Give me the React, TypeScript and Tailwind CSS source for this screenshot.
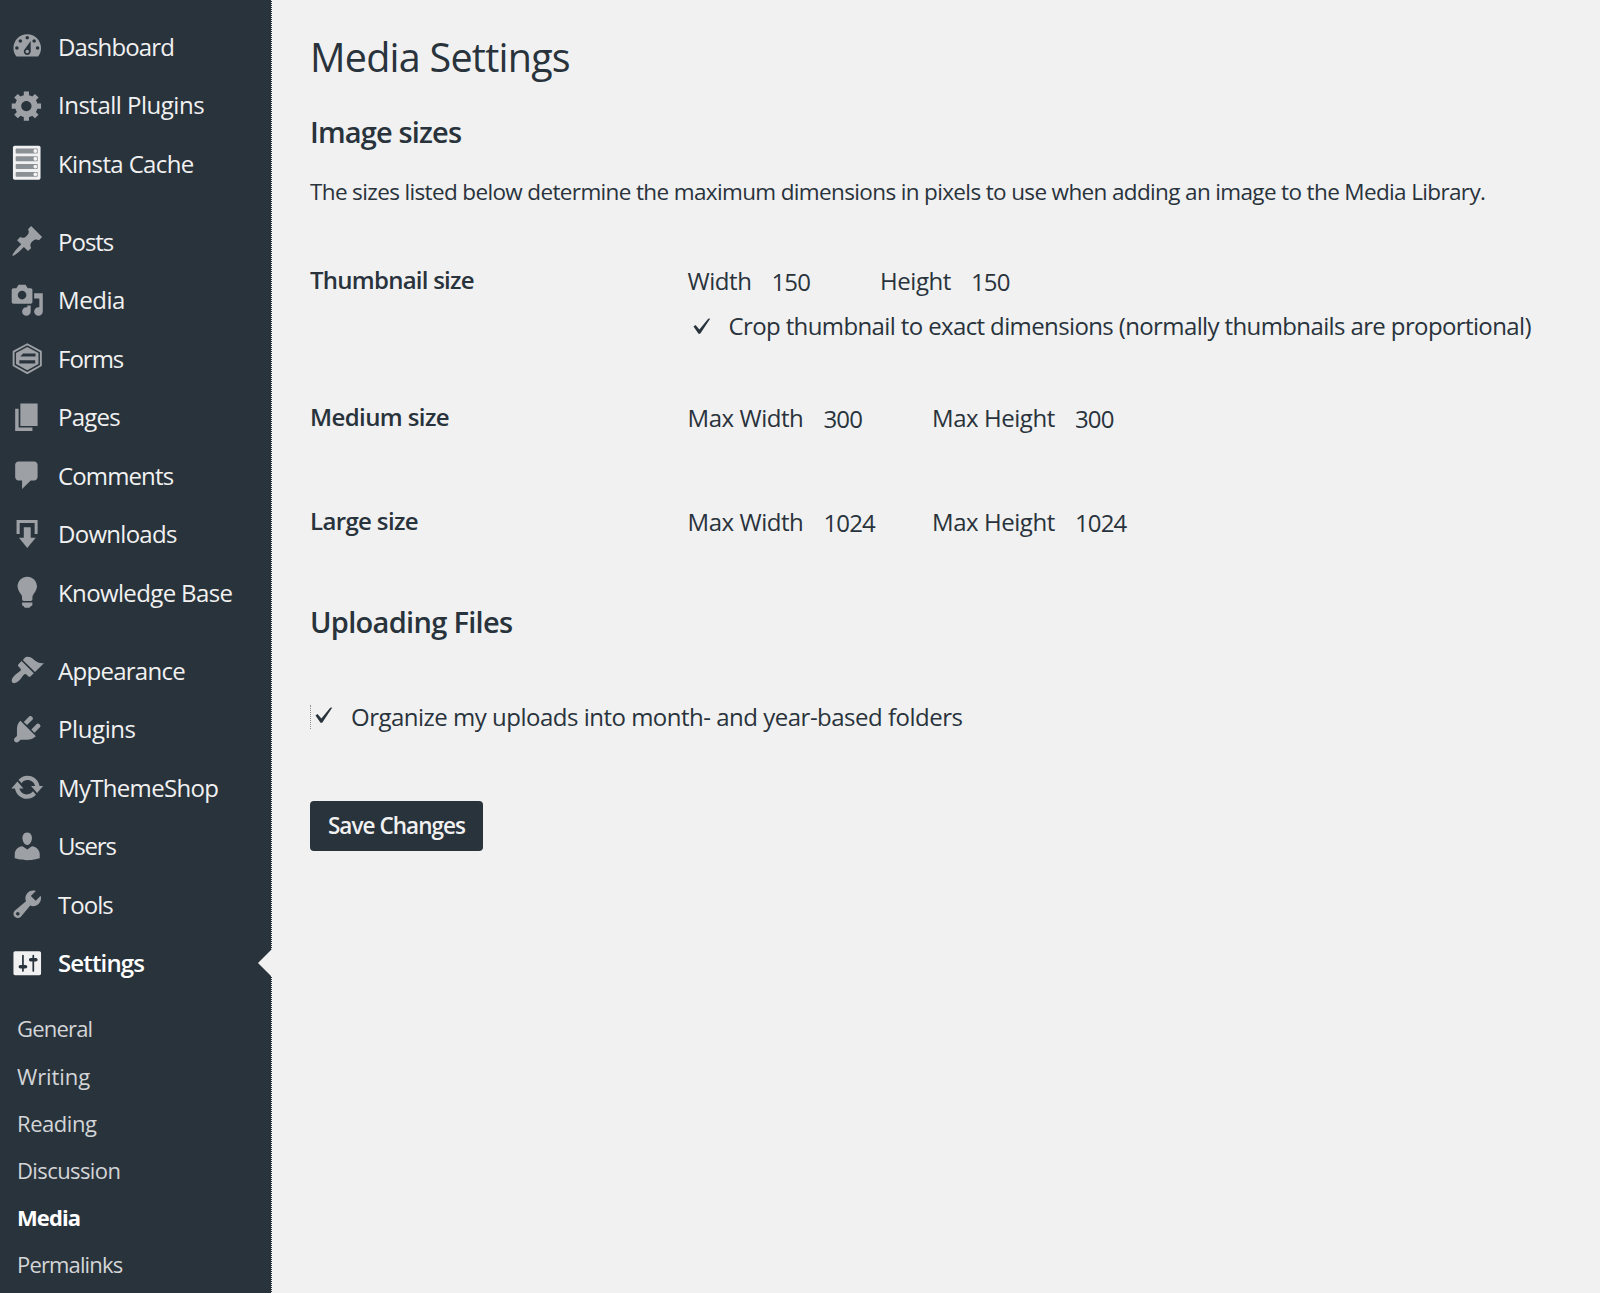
import type { ReactNode } from "react";

const path = (d: string) => <path d={d} />;

const icons: Record<string, ReactNode> = {
  dashboard: path(
    "M3.76 16h12.48c1.1-1.37 1.76-3.11 1.76-5 0-4.42-3.58-8-8-8s-8 3.58-8 8c0 1.89.66 3.63 1.76 5zM10 4c.55 0 1 .45 1 1s-.45 1-1 1-1-.45-1-1 .45-1 1-1zM6 6c.55 0 1 .45 1 1s-.45 1-1 1-1-.45-1-1 .45-1 1-1zm8 0c.55 0 1 .45 1 1s-.45 1-1 1-1-.45-1-1 .45-1 1-1zm-5.37 5.55L12 7v6c0 1.1-.9 2-2 2s-2-.9-2-2c0-.57.24-1.08.63-1.45zM4 10c.55 0 1 .45 1 1s-.45 1-1 1-1-.45-1-1 .45-1 1-1zm12 0c.55 0 1 .45 1 1s-.45 1-1 1-1-.45-1-1 .45-1 1-1zm-5 3c0-.55-.45-1-1-1s-1 .45-1 1 .45 1 1 1 1-.45 1-1z"
  ),
  gear: path(
    "M18 12h-2.18c-.17.7-.44 1.35-.81 1.93l1.54 1.54-2.1 2.1-1.54-1.54c-.58.36-1.23.63-1.91.79V19H8v-2.18c-.68-.16-1.33-.43-1.91-.79l-1.54 1.54-2.12-2.12 1.54-1.54c-.36-.58-.63-1.23-.79-1.91H1V9.03h2.17c.16-.7.44-1.35.8-1.94L2.43 5.55l2.1-2.1 1.54 1.54c.58-.37 1.24-.64 1.93-.81V2h3v2.18c.68.16 1.33.43 1.91.79l1.54-1.54 2.12 2.12-1.54 1.54c.36.59.64 1.24.8 1.94H18V12zm-8.5 1.5c1.66 0 3-1.34 3-3s-1.34-3-3-3-3 1.34-3 3 1.34 3 3 3z"
  ),
  server: (
    <>
      <rect x="1.7" y="-0.2" width="16" height="19.8" rx="1" fill="#f1f1f1" />
      {[1.5, 6, 10.5, 15].map((y) => (
        <g key={y}>
          <rect x="3.3" y={y} width="12.8" height="2.8" rx="0.5" fill="#8b9095" />
          <circle cx="14.7" cy={y + 1.4} r="1.1" fill="#f1f1f1" />
        </g>
      ))}
    </>
  ),
  pin: path(
    "M10.44 3.02l1.82-1.82 6.36 6.35-1.83 1.82c-1.05-.68-2.48-.57-3.41.36l-.75.75c-.92.93-1.04 2.35-.35 3.41l-1.83 1.82-2.41-2.41-2.8 2.79c-.42.42-3.38 2.71-3.8 2.29s1.86-3.39 2.28-3.81l2.79-2.79L4.1 9.36l1.83-1.82c1.05.69 2.48.57 3.4-.36l.75-.75c.93-.92 1.05-2.35.36-3.41z"
  ),
  media: path(
    "M13 11V4c0-.55-.45-1-1-1h-1.67L9 1H5L3.67 3H2c-.55 0-1 .45-1 1v7c0 .55.45 1 1 1h10c.55 0 1-.45 1-1zM7 4.5c1.38 0 2.5 1.12 2.5 2.5S8.38 9.5 7 9.5 4.5 8.38 4.5 7 5.62 4.5 7 4.5zM14 6h5v10.5c0 1.38-1.12 2.5-2.5 2.5S14 17.88 14 16.5s1.12-2.5 2.5-2.5c.17 0 .34.02.5.05V9h-3V6zm-4 8.05V13h2v3.5c0 1.38-1.12 2.5-2.5 2.5S7 17.88 7 16.5 8.12 14 9.5 14c.17 0 .34.02.5.05z"
  ),
  forms: (
    <>
      <path
        d="M10 1.9l7.9 4.3v8L10 18.6 2.1 14.2v-8z"
        fill="none"
        stroke="currentColor"
        strokeWidth="1.1"
        strokeLinejoin="round"
      />
      <path
        fillRule="evenodd"
        d="M10 3.5l6.5 3.5v6.4L10 17l-6.5-3.6V7zM7.6 7.2L6 9h8.8V7.2zM5.4 11.2v1.9h9.2v-1.9z"
      />
    </>
  ),
  pages: path("M6 15V2h10v13H6zm-1 1h8v2H3V5h2v11z"),
  comment: path(
    "M5 2h9c1.1 0 2 .9 2 2v7c0 1.1-.9 2-2 2h-2l-5 5v-5H5c-1.1 0-2-.9-2-2V4c0-1.1.9-2 2-2z"
  ),
  download: path("M3.8 1.7h12.2v8.1h-1.7V3.5H5.6v6.3H3.8zM8 6h4v6h2.9L10 17.9 5.2 12H8z"),
  bulb: path(
    "M10 1c3.11 0 5.63 2.52 5.63 5.62 0 1.84-2.03 4.58-2.03 4.58-.33.44-.6 1.25-.6 1.8v1c0 .55-.45 1-1 1H8c-.55 0-1-.45-1-1v-1c0-.55-.27-1.36-.6-1.8 0 0-2.02-2.74-2.02-4.58C4.38 3.52 6.89 1 10 1zM7 16.87V16h6v.87c0 .62-.13 1.13-.75 1.13H12c0 .62-.4 1-1.02 1h-2c-.61 0-.98-.38-.98-1h-.25c-.62 0-.75-.51-.75-1.13z"
  ),
  brush: path(
    "M14.48 11.06L7.41 3.99l1.5-1.5c.5-.56 2.3-.47 3.51.32 1.21.8 1.43 1.28 2.91 2.1 1.18.64 2.45 1.26 4.45.85zm-.71.71L6.7 4.7 4.93 6.47c-.39.39-.39 1.02 0 1.41l1.06 1.06c.39.39.39 1.03 0 1.42-.6.6-1.43 1.11-2.21 1.69-.35.26-.7.53-1.01.84C1.43 14.23.4 16.08 1.4 17.07c.99 1 2.84-.03 4.18-1.36.31-.31.58-.66.85-1.02.57-.78 1.08-1.61 1.69-2.21.39-.39 1.02-.39 1.41 0l1.06 1.06c.39.39 1.02.39 1.41 0z"
  ),
  plug: path(
    "M13.11 4.36L9.87 7.6 8 5.73l3.24-3.24c.35-.34 1.05-.2 1.56.32.52.51.66 1.21.31 1.55zm-8 1.77l.91-1.12 9.01 9.01-1.19.84c-.71.71-2.63 1.16-3.82 1.16H6.14L4.9 17.26c-.59.59-1.54.59-2.12 0-.59-.58-.59-1.53 0-2.12l1.24-1.24v-3.88c0-1.13.4-3.19 1.09-3.89zm7.26 3.97l3.24-3.24c.34-.35 1.04-.21 1.55.31.52.51.66 1.21.31 1.55l-3.24 3.25z"
  ),
  update: path(
    "M10.2 3.28c3.53 0 6.43 2.61 6.92 6h2.08l-3.5 4-3.5-4h2.32c-.45-1.97-2.21-3.45-4.32-3.45-1.45 0-2.73.71-3.54 1.78L4.95 5.66C6.23 4.2 8.11 3.28 10.2 3.28zm-.4 13.44c-3.52 0-6.43-2.61-6.92-6H.8l3.5-4c1.17 1.33 2.33 2.67 3.5 4H5.48c.45 1.97 2.21 3.45 4.32 3.45 1.45 0 2.73-.71 3.54-1.78l1.71 1.95c-1.28 1.46-3.15 2.38-5.25 2.38z"
  ),
  user: path(
    "M10 9.25c-2.27 0-2.73-3.44-2.73-3.44C7 4.02 7.82 2 9.97 2c2.16 0 2.98 2.02 2.71 3.81 0 0-.41 3.44-2.68 3.44zm0 2.57L12.72 10c2.39 0 4.52 2.33 4.52 4.53v2.49s-3.65 1.13-7.24 1.13c-3.65 0-7.24-1.13-7.24-1.13v-2.49c0-2.25 1.94-4.48 4.47-4.48z"
  ),
  wrench: path(
    "M16.68 9.77c-1.34 1.34-3.3 1.67-4.95.99l-5.41 6.52c-.99.99-2.59.99-3.58 0s-.99-2.59 0-3.57l6.52-5.42c-.68-1.65-.35-3.61.99-4.95 1.28-1.28 3.12-1.62 4.72-1.06l-2.89 2.89 2.82 2.82 2.86-2.87c.53 1.58.18 3.39-1.08 4.65zM3.81 16.21c.4.39 1.04.39 1.43 0 .4-.4.4-1.04 0-1.43-.39-.4-1.03-.4-1.43 0-.39.39-.39 1.03 0 1.43z"
  ),
  sliders: path(
    "M18 16V4c0-.55-.45-1-1-1H3c-.55 0-1 .45-1 1v12c0 .55.45 1 1 1h14c.55 0 1-.45 1-1zM8 11h1c.55 0 1 .45 1 1s-.45 1-1 1H8v1.5c0 .28-.22.5-.5.5s-.5-.22-.5-.5V13H6c-.55 0-1-.45-1-1s.45-1 1-1h1V5.5c0-.28.22-.5.5-.5s.5.22.5.5V11zm5-2h-1c-.55 0-1-.45-1-1s.45-1 1-1h1V5.5c0-.28.22-.5.5-.5s.5.22.5.5V7h1c.55 0 1 .45 1 1s-.45 1-1 1h-1v5.5c0 .28-.22.5-.5.5s-.5-.22-.5-.5V9z"
  ),
};

type Item = { icon: string; label: string; track: string; current?: boolean };

const groups: Item[][] = [
  [
    { icon: "dashboard", label: "Dashboard", track: "tracking-[-0.87px]" },
    { icon: "gear", label: "Install Plugins", track: "tracking-[-0.5px]" },
    { icon: "server", label: "Kinsta Cache", track: "tracking-[-0.63px]" },
  ],
  [
    { icon: "pin", label: "Posts", track: "tracking-[-1px]" },
    { icon: "media", label: "Media", track: "tracking-[-0.45px]" },
    { icon: "forms", label: "Forms", track: "tracking-[-1px]" },
    { icon: "pages", label: "Pages", track: "tracking-[-0.75px]" },
    { icon: "comment", label: "Comments", track: "tracking-[-0.87px]" },
    { icon: "download", label: "Downloads", track: "tracking-[-0.72px]" },
    { icon: "bulb", label: "Knowledge Base", track: "tracking-[-0.63px]" },
  ],
  [
    { icon: "brush", label: "Appearance", track: "tracking-[-0.72px]" },
    { icon: "plug", label: "Plugins", track: "tracking-[-0.4px]" },
    { icon: "update", label: "MyThemeShop", track: "tracking-[-0.68px]" },
    { icon: "user", label: "Users", track: "tracking-[-1.2px]" },
    { icon: "wrench", label: "Tools", track: "tracking-[-0.95px]" },
    { icon: "sliders", label: "Settings", track: "tracking-[-0.85px]", current: true },
  ],
];

const submenu = [
  { label: "General", style: "tracking-[-0.8px]" },
  { label: "Writing", style: "tracking-[-0.1px]" },
  { label: "Reading", style: "tracking-[-0.45px]" },
  { label: "Discussion", style: "tracking-[-0.6px]" },
  { label: "Media", style: "tracking-[-0.9px] font-bold text-white" },
  { label: "Permalinks", style: "tracking-[-0.85px]" },
];

function MenuItem({ icon, label, track, current }: Item) {
  return (
    <a className="relative flex h-[58.5px] items-center pl-[10px]">
      <svg
        viewBox="0 0 20 20"
        className={`-mt-px h-[34.5px] w-[34.5px] shrink-0 overflow-visible fill-current ${current ? "text-[#f1f1f1]" : "text-[#9da1a5]"}`}
      >
        {icons[icon]}
      </svg>
      <span
        className={`ml-[13.5px] whitespace-nowrap text-2xl ${track} ${current ? "font-semibold text-white" : "text-[#f1f1f1]"}`}
      >
        {label}
      </span>
      {current && (
        <svg viewBox="0 0 14 28" className="absolute -right-px top-[15px] h-7 w-[14px] fill-[#f1f1f1]">
          <path d="M14 0v28L0 14z" />
        </svg>
      )}
    </a>
  );
}

function Sidebar() {
  return (
    <aside className="w-[272px] shrink-0 border-r border-dotted border-[#f1f1f1] bg-[#29333c] pt-[17.5px]">
      <nav className="flex flex-col gap-[19.5px]">
        {groups.map((group, i) => (
          <div key={i}>
            {group.map((item) => (
              <MenuItem key={item.label} {...item} />
            ))}
          </div>
        ))}
      </nav>
      <ul className="pl-[17px] pt-[13px] text-[22px] text-[#d3d5d7]">
        {submenu.map(({ label, style }) => (
          <li key={label} className={`flex h-[47.2px] items-center ${style}`}>
            {label}
          </li>
        ))}
      </ul>
    </aside>
  );
}

function Check() {
  return (
    <svg viewBox="0 0 18 17" className="h-[17px] w-[18px] shrink-0 fill-[#29333c]">
      <path d="M.5 8.4l2-1.4 3.9 4.4L15.2.8l2.1-.4L7.2 15.8H5.5z" />
    </svg>
  );
}

type Dims = {
  title: string;
  titleTrack: string;
  width: string;
  height: string;
  value: string;
  first: string;
  second: string;
  margin: string;
};

const sizes: Dims[] = [
  {
    title: "Thumbnail size",
    titleTrack: "tracking-[-0.75px]",
    width: "Width",
    height: "Height",
    value: "150",
    first: "w-[84px]",
    second: "w-[91px]",
    margin: "mt-14",
  },
  {
    title: "Medium size",
    titleTrack: "tracking-[-0.6px]",
    width: "Max Width",
    height: "Max Height",
    value: "300",
    first: "w-[136px]",
    second: "w-[143px]",
    margin: "mt-[58px]",
  },
  {
    title: "Large size",
    titleTrack: "tracking-[-0.64px]",
    width: "Max Width",
    height: "Max Height",
    value: "1024",
    first: "w-[136px]",
    second: "w-[143px]",
    margin: "mt-[69px]",
  },
];

function SizeRow({ title, titleTrack, width, height, value, first, second, margin }: Dims) {
  return (
    <div className={`flex ${margin}`}>
      <div className={`w-[377.5px] shrink-0 font-semibold leading-8 ${titleTrack}`}>{title}</div>
      <div>
        <div className="flex leading-[34px] tracking-[-0.45px]">
          <span className={first}>{width}</span>
          <span className="w-[108.5px] pt-px tracking-[-0.85px]">{value}</span>
          <span className={second}>{height}</span>
          <span className="pt-px tracking-[-0.85px]">{value}</span>
        </div>
        {title === "Thumbnail size" && (
          <label className="mt-2.5 flex h-[34px] items-center pl-[5px]">
            <Check />
            <span className="ml-[18px] whitespace-nowrap tracking-[-0.62px]">
              Crop thumbnail to exact dimensions (normally thumbnails are proportional)
            </span>
          </label>
        )}
      </div>
    </div>
  );
}

export default function App() {
  return (
    <div className="flex h-[1293px] w-[1600px] overflow-hidden bg-[#f1f1f1] font-['Open_Sans','Noto_Sans',sans-serif] text-2xl text-[#29333c]">
      <Sidebar />
      <main className="flex min-w-0 flex-1 flex-col items-start pl-[38px] pt-[29px]">
        <h1 className="text-[39.5px] leading-[56px] tracking-[-0.76px]">Media Settings</h1>
        <h2 className="mt-[27px] text-[29px] font-semibold leading-10 tracking-[-0.85px]">Image sizes</h2>
        <p className="mt-6 whitespace-nowrap text-[22.5px] leading-8 tracking-[-0.64px]">
          The sizes listed below determine the maximum dimensions in pixels to use when adding an
          image to the Media Library.
        </p>
        {sizes.map((row) => (
          <SizeRow key={row.title} {...row} />
        ))}
        <h2 className="mt-[62px] text-[29px] font-semibold leading-10 tracking-[-0.69px]">
          Uploading Files
        </h2>
        <label className="mt-[58px] flex h-[34px] items-center">
          <span className="h-6 border-l border-dotted border-[#29333c]/50" />
          <span className="-mt-1 ml-1 flex">
            <Check />
          </span>
          <span className="ml-[18px] whitespace-nowrap tracking-[-0.5px]">
            Organize my uploads into month- and year-based folders
          </span>
        </label>
        <button className="mt-[67px] flex h-[50px] w-[173px] items-center justify-center whitespace-nowrap rounded bg-[#29333c] text-[22.5px] font-semibold tracking-[-0.95px] text-[#f1f1f1]">
          Save Changes
        </button>
      </main>
    </div>
  );
}
